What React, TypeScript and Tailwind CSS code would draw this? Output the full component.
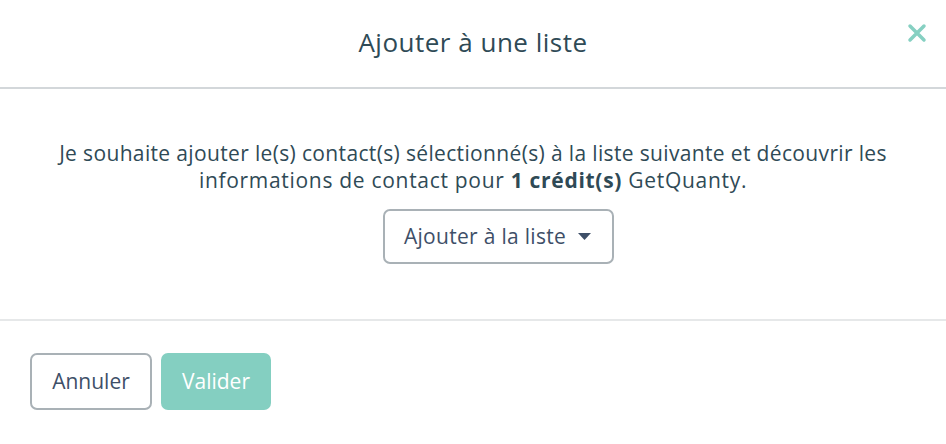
const App = () => {
  return (
    <div
      className="w-[946px] h-[444px] bg-white rounded-b-[12px] flex flex-col text-[#2f4a56]"
      style={{ fontFamily: '"Open Sans", "Noto Sans", sans-serif' }}
    >
      {/* Header */}
      <div className="relative h-[89px] border-b-2 border-[#d3d7da] flex items-center justify-center">
        <h2 className="text-[26px] leading-none pb-[4px] tracking-[0.5px] text-[#2f4a56]">Ajouter à une liste</h2>
        <button className="absolute right-[18px] top-[22px] w-[22px] h-[22px] flex items-center justify-center">
          <svg className="w-[20px] h-[20px]" viewBox="0 0 20 20" fill="none" stroke="#86d0c2" strokeWidth={3.5} strokeLinecap="round">
            <path d="M3 3l14 14M17 3L3 17" />
          </svg>
        </button>
      </div>

      {/* Body */}
      <div className="h-[232px] border-b-2 border-[#e6e8e9] flex flex-col items-center pt-[51px]">
        <p className="text-[21px] leading-[27px] tracking-[0.35px] text-center text-[#2f4a56]">
          Je souhaite ajouter le(s) contact(s) sélectionné(s) à la liste suivante et découvrir les
          <br />
          <span className="tracking-[0.7px]">
            informations de contact pour <span className="font-bold">1 crédit(s)</span> GetQuanty.
          </span>
        </p>
        <button className="mt-[15px] ml-[51px] h-[55px] pl-[19px] pr-[21px] border-2 border-[#a9b1b6] rounded-[7px] flex items-center gap-[12px] text-[21px] tracking-[0.3px] text-[#3e4f68]">
          <span>Ajouter à la liste</span>
          <svg className="w-[13px] h-[7px]" viewBox="0 0 13 7" fill="#3e4f68">
            <path d="M0 0h13L6.5 7z" />
          </svg>
        </button>
      </div>

      {/* Footer */}
      <div className="flex items-start gap-[9px] px-[30px] pt-[32px]">
        <button className="w-[122px] h-[57px] border-2 border-[#a9b1b6] rounded-[7px] text-[21px] text-[#3e4f68]">
          Annuler
        </button>
        <button className="w-[110px] h-[57px] bg-[#84cfc1] rounded-[7px] text-[21px] text-white">Valider</button>
      </div>
    </div>
  );
};

export default App;
